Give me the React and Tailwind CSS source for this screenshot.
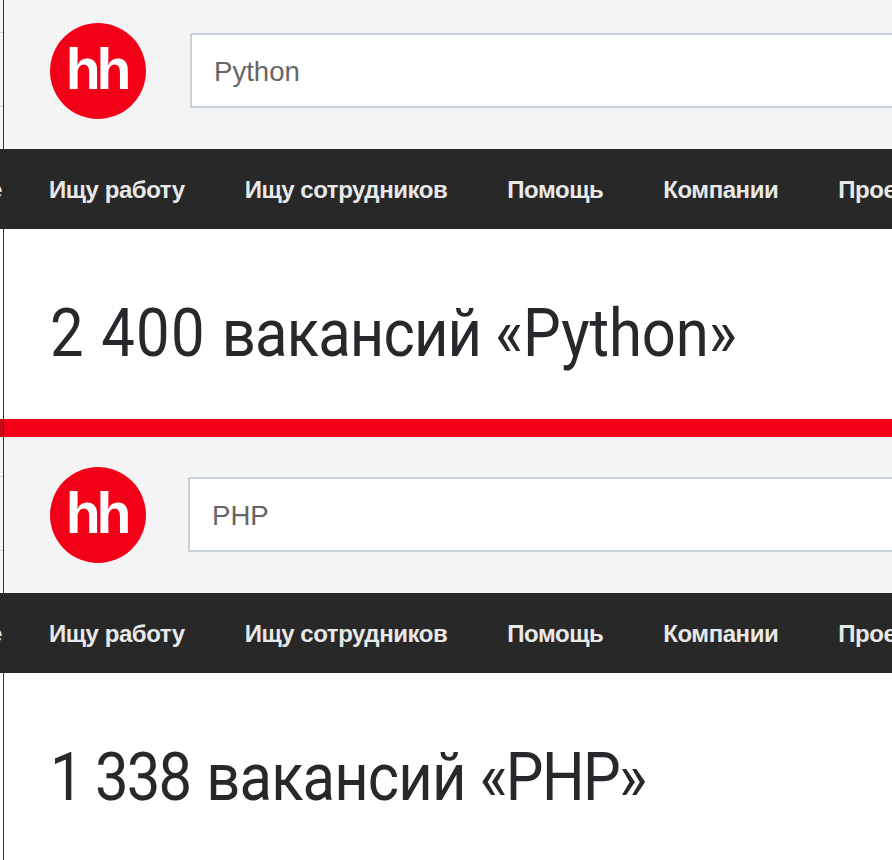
const sans = "font-['Liberation_Sans',Arial,sans-serif]";
const navItems = ["Ищу работу", "Ищу сотрудников", "Помощь", "Компании", "Проекты"];

function Logo() {
  return (
    <div className="w-[96px] h-[96px] shrink-0 rounded-full bg-[#f20018] flex items-center justify-center">
      <span className={`${sans} font-bold text-white text-[57px] leading-none tracking-[-4px] -ml-[3px] -mt-[4px]`}>
        hh
      </span>
    </div>
  );
}

function Nav() {
  return (
    <div className="h-[80px] bg-[#282828] overflow-hidden flex items-center whitespace-nowrap">
      <div className="flex -ml-[11px] mt-[1px]">
        <span className={`${sans} w-[13px] mr-[47px] text-[#e8e8e8] text-[24px] leading-none font-bold`}>е</span>
        <div className="flex gap-[60px]">
          {navItems.map((item) => (
            <span key={item} className={`${sans} text-[#e8e8e8] text-[24px] leading-none font-bold tracking-[-0.45px]`}>
              {item}
            </span>
          ))}
        </div>
      </div>
    </div>
  );
}

function Line() {
  return <div className="w-px shrink-0 bg-[#333]" />;
}

function Panel({ query, number, numberClass, quote, quoteClass, headerClass, logoTop, stripTop, inputLeft, bodyHeight }) {
  return (
    <section>
      <div className={`${headerClass} bg-[#f4f4f5] flex`}>
        <div className={`w-[3px] shrink-0 h-[75px] ${stripTop} border-y border-[#d4d4d4]`} />
        <Line />
        <div className={`flex items-start pl-[46px] ${logoTop}`}>
          <Logo />
          <div className={`${inputLeft} mt-[10px] w-[800px] h-[75px] shrink-0 bg-white border-2 border-[#c8d0da] flex items-center pl-[22px]`}>
            <span className={`${sans} text-[27.6px] text-[#666] mt-[2px]`}>{query}</span>
          </div>
        </div>
      </div>
      <Nav />
      <div className={`${bodyHeight} bg-white flex pl-[3px]`}>
        <Line />
        <h1 className="ml-[46px] pt-[63px] origin-left scale-x-[0.893] font-['Roboto',sans-serif] font-normal text-[#27282b] text-[67px] leading-[82px] whitespace-nowrap">
          <span className={numberClass}>{number}</span>
          <span className="tracking-[-1px]"> вакансий </span>
          <span className={quoteClass}>{quote}</span>
        </h1>
      </div>
    </section>
  );
}

export default function App() {
  return (
    <div className="w-[892px] h-[860px] overflow-hidden bg-white">
      <Panel
        query="Python"
        number="2 400"
        numberClass="tracking-[1.5px] mr-[2px]"
        quote="«Python»"
        quoteClass="tracking-[-0.1px]"
        headerClass="h-[149px]"
        logoTop="pt-[23px]"
        stripTop="mt-[32px]"
        inputLeft="ml-[44px]"
        bodyHeight="h-[190px]"
      />
      <div className="h-[18px] bg-[#f20018] flex">
        <div className="w-[3px] shrink-0 bg-[#c80a1c]" />
        <Line />
      </div>
      <Panel
        query="PHP"
        number="1 338"
        numberClass="tracking-[-2px] mr-[2px]"
        quote="«PHP»"
        quoteClass="tracking-[-1.9px]"
        headerClass="h-[156px]"
        logoTop="pt-[30px]"
        stripTop="mt-[39px]"
        inputLeft="ml-[42px]"
        bodyHeight="h-[187px]"
      />
    </div>
  );
}
